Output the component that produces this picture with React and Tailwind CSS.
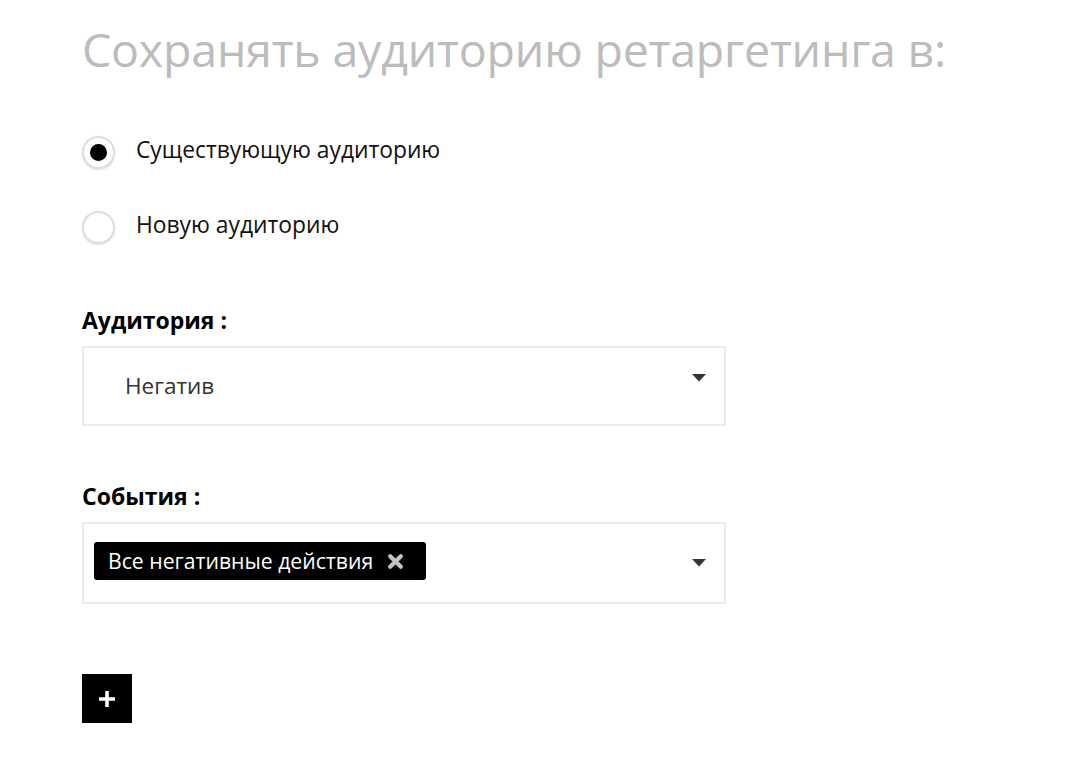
import React, { useState } from "react";

const font = { fontFamily: '"Open Sans", "Noto Sans", sans-serif' };

const Radio = ({ checked, label, onClick }) => (
  <button type="button" onClick={onClick} className="flex items-center gap-[21px] text-left">
    <span className="w-[33px] h-[33px] rounded-full border-2 border-[#dedede] shadow-[0_1px_2px_rgba(0,0,0,0.12)] flex items-center justify-center bg-white">
      {checked && <span className="w-[17px] h-[17px] rounded-full bg-black"></span>}
    </span>
    <span className="-mt-[5px] text-[22.8px] text-[#111] leading-none">{label}</span>
  </button>
);

const Arrow = () => (
  <svg width="14" height="8" viewBox="0 0 14 8" className="shrink-0">
    <path d="M0 0 H14 L7 7.5 Z" fill="#333" />
  </svg>
);

export default function App() {
  const [mode, setMode] = useState("existing");

  return (
    <div className="min-h-screen bg-white pl-[82px] pt-[20px]" style={font}>
      <h1 className="text-[46.5px] text-[#bcbcbc] leading-[58px] tracking-[-0.2px]">
        Сохранять аудиторию ретаргетинга в:
      </h1>

      <div className="mt-[58px] flex flex-col gap-[42px]">
        <Radio checked={mode === "existing"} label="Существующую аудиторию" onClick={() => setMode("existing")} />
        <Radio checked={mode === "new"} label="Новую аудиторию" onClick={() => setMode("new")} />
      </div>

      <div className="mt-[66px] w-[644px]">
        <p className="text-[23px] font-bold text-black leading-[21px]">Аудитория :</p>
        <div className="mt-[15px] h-[80px] border-2 border-[#ececec] flex items-center justify-between pl-[41px] pr-[18px]">
          <span className="text-[22.5px] text-[#333]">Негатив</span>
          <span className="-mt-[16px]"><Arrow /></span>
        </div>
      </div>

      <div className="mt-[60px] w-[644px]">
        <p className="text-[23px] font-bold text-black leading-[21px]">События :</p>
        <div className="mt-[15px] h-[82px] border-2 border-[#ececec] flex items-center justify-between pl-[10px] pr-[18px]">
          <span className="-mt-[4px] h-[38px] bg-black rounded-[3px] flex items-center pl-[14px] pr-[22px] gap-[14px]">
            <span className="text-[21.2px] text-white leading-none">Все негативные действия</span>
            <svg width="17" height="17" viewBox="0 0 16 16">
              <path d="M3 3 L13 13 M13 3 L3 13" stroke="#c4c4c4" strokeWidth="4" strokeLinecap="round" />
            </svg>
          </span>
          <Arrow />
        </div>
      </div>

      <button type="button" className="mt-[70px] w-[50px] h-[49px] bg-black flex items-center justify-center">
        <svg width="18" height="18" viewBox="0 0 18 18">
          <path d="M9 1 V17 M1 9 H17" stroke="#fff" strokeWidth="3.5" />
        </svg>
      </button>
    </div>
  );
}
